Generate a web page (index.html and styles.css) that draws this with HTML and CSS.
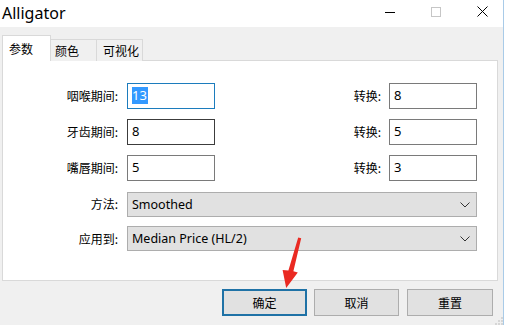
FILE: index.html
```html
<!DOCTYPE html>
<html lang="zh">
<head>
<meta charset="utf-8">
<title>Alligator</title>
<link rel="stylesheet" href="styles.css">
</head>
<body>
<div class="window">
  <div class="titlebar">
    <span class="title">Alligator</span>
    <div class="controls">
      <div class="ctl"><svg width="10" height="10" viewBox="0 0 10 10"><path d="M0 5.5H10" stroke="#000" stroke-width="1"/></svg></div>
      <div class="ctl"><svg width="10" height="10" viewBox="0 0 10 10"><rect x="0.5" y="0.5" width="9" height="9" fill="none" stroke="#c6c6c6" stroke-width="1"/></svg></div>
      <div class="ctl"><svg width="11" height="11" viewBox="0 0 11 11"><path d="M0.5 0.5L10.5 10.5M10.5 0.5L0.5 10.5" stroke="#000" stroke-width="1"/></svg></div>
    </div>
  </div>
  <div class="client">
    <div class="tabs">
      <div class="tab active">参数</div>
      <div class="tab t2">颜色</div>
      <div class="tab t3">可视化</div>
    </div>
    <div class="panel">
      <div class="form">
        <label class="lbl">咽喉期间:</label>
        <div class="field focus"><span class="sel">13</span></div>
        <label class="lbl lbl-r">转换:</label>
        <div class="field">8</div>

        <label class="lbl">牙齿期间:</label>
        <div class="field dark">8</div>
        <label class="lbl lbl-r">转换:</label>
        <div class="field">5</div>

        <label class="lbl">嘴唇期间:</label>
        <div class="field">5</div>
        <label class="lbl lbl-r">转换:</label>
        <div class="field">3</div>

        <label class="lbl lbl-sel">方法:</label>
        <div class="combo first"><span>Smoothed</span><svg class="chev" width="10" height="6" viewBox="0 0 10 6"><path d="M0.5 0.5L5 5L9.5 0.5" fill="none" stroke="#333" stroke-width="1"/></svg></div>

        <label class="lbl lbl-sel">应用到:</label>
        <div class="combo"><span>Median Price (HL/2)</span><svg class="chev" width="10" height="6" viewBox="0 0 10 6"><path d="M0.5 0.5L5 5L9.5 0.5" fill="none" stroke="#333" stroke-width="1"/></svg></div>
      </div>
    </div>
    <div class="buttons">
      <div class="btn primary">确定</div>
      <div class="btn">取消</div>
      <div class="btn last">重置</div>
    </div>
  </div>
  <svg class="grip" width="9" height="9" viewBox="0 0 9 9">
    <rect x="7" y="1" width="2" height="2" fill="#d6d6d6"/>
    <rect x="4" y="4" width="2" height="2" fill="#d6d6d6"/>
    <rect x="7" y="4" width="2" height="2" fill="#d6d6d6"/>
    <rect x="1" y="7" width="2" height="2" fill="#d6d6d6"/>
    <rect x="4" y="7" width="2" height="2" fill="#d6d6d6"/>
    <rect x="7" y="7" width="2" height="2" fill="#d6d6d6"/>
  </svg>
  <svg class="arrow" width="506" height="325" viewBox="0 0 506 325">
    <polygon points="298.2,237.5 301.2,238.3 293.4,271.2 297.8,272.4 286.2,288 282.6,270 288.4,270.4" fill="#ea2a22"/>
  </svg>
</div>
</body>
</html>
```

FILE: styles.css
```css
html, body {
  margin: 0;
  padding: 0;
  background: #ffffff;
}
body {
  width: 506px;
  height: 325px;
  overflow: hidden;
  font-family: "Noto Sans CJK SC", "Noto Sans", sans-serif;
}
.window {
  position: relative;
  width: 503px;
  height: 325px;
  border-right: 1px solid #a9cbe8;
}
.titlebar {
  height: 27px;
  display: flex;
  align-items: center;
  background: #ffffff;
}
.title {
  font-family: "Noto Sans", sans-serif;
  font-size: 16px;
  color: #000;
  padding-left: 2px;
  margin-top: -2px;
}
.controls {
  margin-left: auto;
  display: flex;
  margin-right: -2px;
  align-self: flex-start;
  height: 23px;
}
.ctl {
  width: 46px;
  display: flex;
  align-items: center;
  justify-content: center;
}
.client {
  background: #f0f0f0;
  height: 298px;
  padding-top: 8px;
  box-sizing: border-box;
}
.tabs {
  display: flex;
  align-items: flex-end;
  padding-left: 2px;
  height: 26px;
  margin-bottom: -1px;
  position: relative;
  z-index: 1;
}
.tab {
  box-sizing: border-box;
  height: 22px;
  border: 1px solid #d9d9d9;
  border-bottom: none;
  font-size: 12px;
  line-height: 21px;
  color: #000;
  background: #f0f0f0;
  text-align: left;
}
.tab.active {
  height: 26px;
  width: 49px;
  background: #ffffff;
  line-height: 26px;
  padding-left: 6px;
}
.tab.t2 {
  width: 46px;
  border-left: none;
  padding-left: 4px;
}
.tab.t3 {
  width: 47px;
  margin-left: -1px;
  padding-left: 6px;
}
.panel {
  margin-left: 2px;
  width: 496px;
  height: 221px;
  box-sizing: border-box;
  border: 1px solid #d9d9d9;
  background: #ffffff;
}
.form {
  display: grid;
  grid-template-columns: 124px 88px 174px 88px;
  grid-template-rows: 26px 26px 26px 25px 25px;
  row-gap: 10px;
  padding-top: 22px;
}
.form .combo.first {
  margin-top: 1px;
}
.lbl {
  font-size: 12px;
  color: #000;
  text-align: right;
  padding-right: 9px;
  line-height: 26px;
}
.lbl-r {
  padding-right: 8px;
}
.lbl-sel {
  line-height: 25px;
}
.field {
  box-sizing: border-box;
  border: 1px solid #7a7a7a;
  height: 26px;
  font-family: "Noto Sans", sans-serif;
  font-size: 13px;
  line-height: 23px;
  padding-left: 4px;
  color: #000;
}
.field.focus {
  border-color: #1c7cbd;
}
.field.dark {
  border-color: #3c3c3c;
}
.sel {
  background: #3399ff;
  color: #ffffff;
  display: inline-block;
  line-height: 17px;
  padding: 0 1px 0 0;
}
.combo {
  grid-column: 2 / 5;
  box-sizing: border-box;
  height: 25px;
  border: 1px solid #adadad;
  background: #e1e1e1;
  display: flex;
  align-items: center;
  padding-left: 4px;
  padding-right: 6px;
  font-family: "Noto Sans", sans-serif;
  font-size: 12.5px;
  color: #000;
}
.chev {
  margin-left: auto;
}
.buttons {
  display: flex;
  justify-content: flex-end;
  gap: 7px;
  padding-right: 10px;
  margin-top: 8px;
}
.btn {
  box-sizing: border-box;
  width: 85px;
  height: 27px;
  border: 1px solid #adadad;
  background: #e1e1e1;
  font-size: 12px;
  line-height: 25px;
  text-align: center;
  color: #000;
}
.btn.primary {
  border: 2px solid #1f72a6;
  line-height: 23px;
}
.btn.last {
  margin-left: 1px;
  width: 86px;
}
.grip {
  position: absolute;
  right: 0;
  bottom: 0;
}
.arrow {
  position: absolute;
  left: 0;
  top: 0;
  pointer-events: none;
}
```
